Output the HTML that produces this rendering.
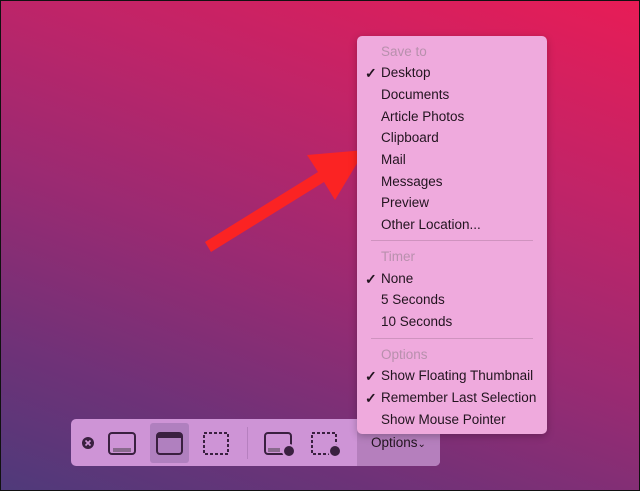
<!DOCTYPE html>
<html><head><style>
html,body{margin:0;padding:0;}
body{width:640px;height:491px;overflow:hidden;position:relative;font-family:"Liberation Sans",sans-serif;
background:linear-gradient(200deg,#e81c56 0%,#c02468 30%,#9a2a72 55%,#6e3278 80%,#4f3a7a 100%);}
.frame{position:absolute;inset:0;border:1px solid #111;box-sizing:border-box;pointer-events:none;}
.menu{position:absolute;left:357px;top:36px;width:190px;height:398px;background:#efaadd;border-radius:5px;box-shadow:0 2px 8px rgba(0,0,0,.25);}
.it{position:absolute;left:24px;font-size:13.5px;color:#22141f;line-height:16px;white-space:nowrap;}
.h{color:#b890ad;}
.ck{position:absolute;left:8px;font-size:14px;font-weight:bold;color:#22141f;line-height:16px;}
.sep{position:absolute;left:14px;width:162px;height:1px;background:#cf93bf;}
.bar{position:absolute;left:71px;top:419px;width:369px;height:47px;background:#ce94d6;border-radius:5px;overflow:hidden;}
.opt{position:absolute;left:286px;top:0;width:83px;height:47px;background:#b57fbd;}
</style></head><body>
<svg width="640" height="491" style="position:absolute;left:0;top:0">
<polygon points="205,242 211,252 324,182 335,200 365,150 307,155 318,172" fill="#fb2323"/>
</svg>
<div class="bar">
<div class="opt"></div>
<div style="position:absolute;left:79px;top:4px;width:39px;height:40px;background:#b080bf;border-radius:3px"></div>
<div style="position:absolute;left:176px;top:8px;width:1px;height:32px;background:#b680bf"></div>
<svg width="369" height="47" style="position:absolute;left:0;top:0">
<circle cx="17" cy="24" r="6" fill="#3a2040"/><path d="M14.5 21.5l5 5M19.5 21.5l-5 5" stroke="#ce94d6" stroke-width="1.6"/>
<rect x="38" y="14" width="26" height="21" rx="3" fill="none" stroke="#3a2040" stroke-width="2"/><rect x="42" y="29" width="18" height="4" fill="#8a6a8e"/>
<rect x="86" y="14" width="25" height="21" rx="3" fill="none" stroke="#3a2040" stroke-width="2"/><rect x="87" y="15" width="23" height="4" fill="#3a2040"/>
<rect x="133" y="14" width="24" height="21" fill="none" stroke="#3a2040" stroke-width="2" stroke-dasharray="3 2"/>
<rect x="194" y="14" width="26" height="21" rx="3" fill="none" stroke="#3a2040" stroke-width="2"/><rect x="197" y="29" width="12" height="4" fill="#8a6a8e"/>
<circle cx="218" cy="32" r="6" fill="#3a2040" stroke="#ce94d6" stroke-width="2"/>
<rect x="241" y="14" width="24" height="21" fill="none" stroke="#3a2040" stroke-width="2" stroke-dasharray="3 2"/>
<circle cx="264" cy="32" r="6" fill="#3a2040" stroke="#ce94d6" stroke-width="2"/>
</svg>
<div style="position:absolute;left:300px;top:16px;font-size:13.5px;color:#22141f">Options<span style="font-size:10px">&#8964;</span></div>
</div>
<div class="menu">
<div class="it h" style="top:8px">Save to</div>
<div class="ck" style="top:29px">✓</div><div class="it" style="top:29px">Desktop</div>
<div class="it" style="top:51px">Documents</div>
<div class="it" style="top:73px">Article Photos</div>
<div class="it" style="top:94px">Clipboard</div>
<div class="it" style="top:116px">Mail</div>
<div class="it" style="top:138px">Messages</div>
<div class="it" style="top:159px">Preview</div>
<div class="it" style="top:181px">Other Location...</div>
<div class="sep" style="top:204px"></div>
<div class="it h" style="top:213px">Timer</div>
<div class="ck" style="top:235px">✓</div><div class="it" style="top:235px">None</div>
<div class="it" style="top:256px">5 Seconds</div>
<div class="it" style="top:278px">10 Seconds</div>
<div class="sep" style="top:302px"></div>
<div class="it h" style="top:311px">Options</div>
<div class="ck" style="top:332px">✓</div><div class="it" style="top:332px">Show Floating Thumbnail</div>
<div class="ck" style="top:354px">✓</div><div class="it" style="top:354px">Remember Last Selection</div>
<div class="it" style="top:376px">Show Mouse Pointer</div>
</div>
<div class="frame"></div>
</body></html>
